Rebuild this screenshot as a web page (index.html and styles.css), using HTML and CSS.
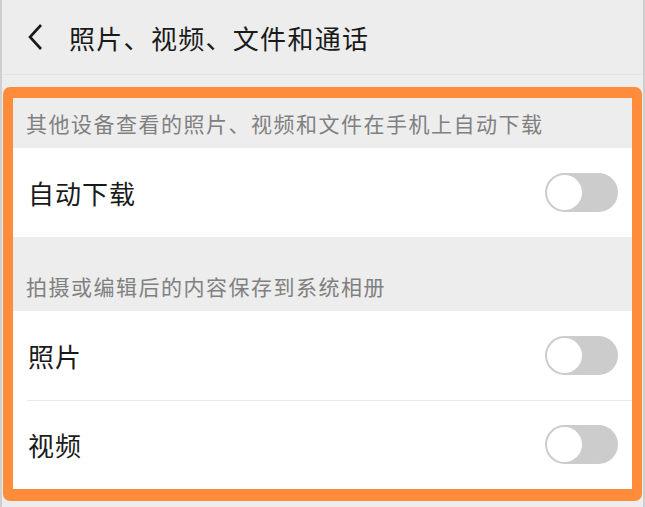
FILE: index.html
```html
<!DOCTYPE html>
<html lang="zh-CN">
<head>
  <meta charset="UTF-8">
  <title>照片、视频、文件和通话</title>
  <link rel="stylesheet" href="styles.css">
</head>
<body>
  <div class="screen">
    <div class="topbar">
      <svg class="back" width="16" height="28" viewBox="0 0 16 28">
        <polyline points="13,2 2,14 13,26" fill="none" stroke="#1a1a1a" stroke-width="2.6" stroke-linejoin="miter"/>
      </svg>
      <span class="title">照片、视频、文件和通话</span>
    </div>

    <div class="highlight">
      <div class="group-tip">其他设备查看的照片、视频和文件在手机上自动下载</div>
      <div class="row">
        <span>自动下载</span>
        <div class="switch"><div class="knob"></div></div>
      </div>

      <div class="group-tip tall">拍摄或编辑后的内容保存到系统相册</div>
      <div class="row">
        <span>照片</span>
        <div class="switch"><div class="knob"></div></div>
      </div>
      <div class="row line">
        <span>视频</span>
        <div class="switch"><div class="knob"></div></div>
      </div>
    </div>
  </div>
</body>
</html>
```

FILE: styles.css
```css
body {
  margin: 0;
  padding: 0;
  background: #ededed;
  font-family: "Noto Sans CJK SC", "Noto Sans", sans-serif;
}

.screen {
  height: 507px;
  box-sizing: border-box;
  border-left: 2px solid #cfcfcf;
  border-right: 2px solid #cfcfcf;
  background: #ededed;
}

/* Top bar */
.topbar {
  height: 75px;
  box-sizing: border-box;
  border-bottom: 1px solid #e2e2e2;
  display: flex;
  align-items: center;
  padding-left: 26px;
}

.back {
  display: block;
  margin-top: -1px;
}

.title {
  margin-left: 25px;
  font-size: 26px;
  letter-spacing: 1.3px;
  color: #1a1a1a;
}

/* Orange frame */
.highlight {
  margin: 12px 1px 0 1px;
  border-style: solid;
  border-color: #ff8c3b;
  border-width: 11px 10px 12px 10px;
  border-radius: 7px;
  background: #fff;
  overflow: hidden;
}

.group-tip {
  height: 50px;
  box-sizing: border-box;
  background: #ededed;
  color: #808080;
  font-size: 21px;
  line-height: 50px;
  padding-left: 13px;
  letter-spacing: 1.5px;
}

.group-tip.tall {
  height: 74px;
  padding-top: 24px;
}

.row {
  height: 89px;
  box-sizing: border-box;
  display: flex;
  align-items: center;
  justify-content: space-between;
  padding: 0 14px 0 15px;
  font-size: 26px;
  color: #1a1a1a;
  letter-spacing: 1px;
  position: relative;
}

.row.line::before {
  content: "";
  position: absolute;
  top: 0;
  left: 14px;
  right: 0;
  height: 1px;
  background: #e8e8e8;
}

/* Switch */
.switch {
  width: 73px;
  height: 39px;
  border-radius: 20px;
  background: #cccccc;
  box-sizing: border-box;
  padding: 2px;
}

.knob {
  width: 35px;
  height: 35px;
  border-radius: 50%;
  background: #fff;
}
```
